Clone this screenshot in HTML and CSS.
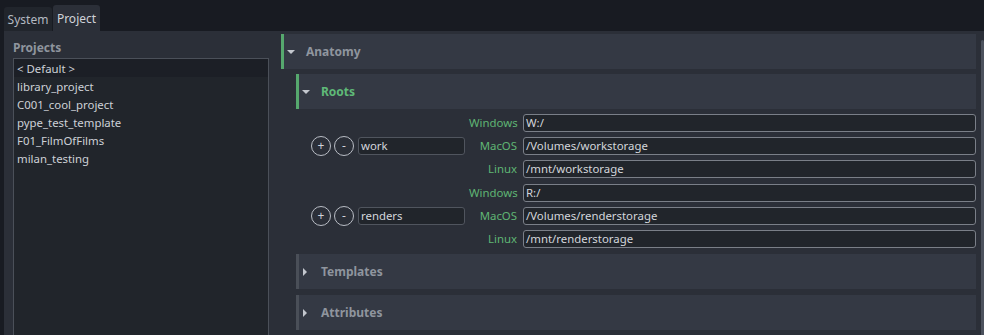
FILE: index.html
```html
<!DOCTYPE html>
<html>
<head>
<meta charset="utf-8">
<link rel="stylesheet" href="styles.css">
</head>
<body>
<div class="tabs">
  <div class="tab">System</div>
  <div class="tab active">Project</div>
</div>
<div class="pane">
  <div class="left">
    <div class="left-title">Projects</div>
    <div class="list">
      <div class="item selected">&lt; Default &gt;</div>
      <div class="item">library_project</div>
      <div class="item">C001_cool_project</div>
      <div class="item">pype_test_template</div>
      <div class="item">F01_FilmOfFilms</div>
      <div class="item">milan_testing</div>
    </div>
  </div>
  <div class="right">
    <div class="content">
      <div class="section">
        <div class="header green"><span class="arrow down"></span><span class="title">Anatomy</span></div>
        <div class="body">
          <div class="section">
            <div class="header green"><span class="arrow down"></span><span class="title g">Roots</span></div>
            <div class="body roots">
              <div class="group">
                <div class="keypart">
                  <span class="circle">+</span>
                  <span class="circle">-</span>
                  <div class="key">work</div>
                </div>
                <div class="paths">
                  <span class="lbl">Windows</span><div class="path">W:/</div>
                  <span class="lbl">MacOS</span><div class="path">/Volumes/workstorage</div>
                  <span class="lbl">Linux</span><div class="path">/mnt/workstorage</div>
                </div>
              </div>
              <div class="group">
                <div class="keypart">
                  <span class="circle">+</span>
                  <span class="circle">-</span>
                  <div class="key">renders</div>
                </div>
                <div class="paths">
                  <span class="lbl">Windows</span><div class="path">R:/</div>
                  <span class="lbl">MacOS</span><div class="path">/Volumes/renderstorage</div>
                  <span class="lbl">Linux</span><div class="path">/mnt/renderstorage</div>
                </div>
              </div>
            </div>
          </div>
          <div class="header grey"><span class="arrow rightarr"></span><span class="title">Templates</span></div>
          <div class="header grey"><span class="arrow rightarr"></span><span class="title">Attributes</span></div>
        </div>
      </div>
    </div>
    <div class="scroll"><div class="handle"></div></div>
  </div>
</div>
</body>
</html>
```
FILE: styles.css
```css
* { box-sizing: border-box; }
html, body { margin: 0; padding: 0; }
body {
  width: 984px;
  height: 335px;
  overflow: hidden;
  background: #181b22;
  font-family: "Noto Sans", "Open Sans", sans-serif;
  font-size: 11.4px;
  color: #c9cdd4;
}
.tabs {
  height: 31px;
  display: flex;
  align-items: flex-end;
  padding-left: 4px;
  gap: 1px;
}
.tab {
  height: 24px;
  width: 48px;
  background: #21252c;
  border-radius: 3px 3px 0 0;
  color: #b4b9c1;
  display: flex;
  align-items: center;
  justify-content: center;
  padding-top: 1px;
  font-size: 12px;
}
.tab.active {
  height: 26px;
  width: 47px;
  background: #2b2f38;
  color: #d0d3d9;
  padding-top: 0;
}
.pane {
  margin-left: 4px;
  height: 304px;
  background: #2b2f38;
  display: flex;
}
.left {
  width: 277px;
  padding-left: 9px;
  display: flex;
  flex-direction: column;
}
.left-title {
  font-weight: bold;
  font-size: 12px;
  color: #8f959e;
  height: 27px;
  line-height: 16px;
  padding-top: 9px;
}
.list {
  width: 256px;
  flex: 1;
  border: 1px solid #4b5059;
  border-bottom: none;
  background: #21252b;
}
.item {
  height: 18px;
  line-height: 19px;
  padding-left: 3px;
  color: #cdd1d7;
}
.item.selected { background: #1c1f26; }
.right {
  flex: 1;
  display: flex;
  padding-top: 3px;
}
.content { flex: 1; }
.scroll {
  width: 3px;
  margin-left: 5px;
  padding-top: 6px;
}
.handle {
  height: 100%;
  background: #4c525d;
  border-radius: 2px 2px 0 0;
}
.section { display: flex; flex-direction: column; }
.header {
  height: 35px;
  background: #343944;
  display: flex;
  align-items: center;
  border-left: 3px solid #56a86e;
  font-weight: bold;
  font-size: 12px;
  color: #8f959e;
}
.header.grey { border-left-color: #4a4f58; }
.arrow {
  width: 8px;
  margin-left: 3px;
  margin-right: 11px;
  height: 8px;
  position: relative;
}
.arrow.down::before {
  content: "";
  position: absolute;
  left: 0;
  top: 2px;
  border-left: 4px solid transparent;
  border-right: 4px solid transparent;
  border-top: 4px solid #c3c7ce;
}
.arrow.rightarr::before {
  content: "";
  position: absolute;
  left: 1px;
  top: 0;
  border-top: 4px solid transparent;
  border-bottom: 4px solid transparent;
  border-left: 4px solid #c3c7ce;
}
.title { padding-bottom: 1px; }
.title.g { color: #5fba78; }
.body {
  padding-top: 5px;
  padding-left: 15px;
  display: flex;
  flex-direction: column;
  gap: 6px;
}
.group {
  display: flex;
  align-items: center;
}
.keypart {
  display: flex;
  align-items: center;
  width: 156px;
}
.circle {
  width: 20px;
  height: 20px;
  border: 1px solid #b9bdc5;
  border-radius: 50%;
  display: flex;
  align-items: center;
  justify-content: center;
  color: #d0d3d9;
  font-size: 12px;
  line-height: 1;
  margin-right: 3px;
  padding-bottom: 1px;
}
.key {
  width: 107px;
  height: 18px;
  margin-left: 1px;
  border: 1px solid #50555e;
  border-radius: 3px;
  background: #21252b;
  line-height: 16px;
  padding-left: 2px;
  color: #d3d6db;
}
.paths {
  flex: 1;
  display: grid;
  grid-template-columns: 48px 1fr;
  column-gap: 6px;
  row-gap: 5px;
  margin-left: 2px;
}
.lbl {
  text-align: right;
  color: #5fb574;
  line-height: 18px;
  height: 18px;
}
.path {
  height: 18px;
  border: 1px solid #7a7f88;
  border-radius: 3px;
  background: #21252b;
  line-height: 16px;
  padding-left: 2px;
  color: #d3d6db;
}
```
